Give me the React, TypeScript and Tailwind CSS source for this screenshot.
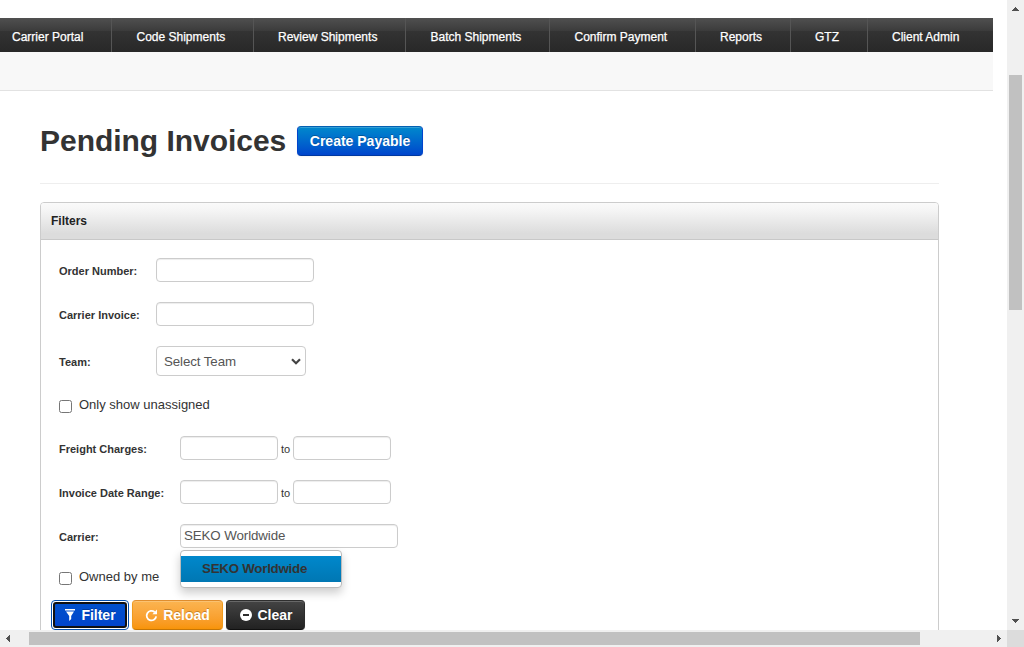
import type { ReactNode } from "react";

const navItems = [
  { label: "Carrier Portal", cell: "w-[112px] pl-[12px]" },
  { label: "Code Shipments", cell: "w-[142px] pl-[24.5px]" },
  { label: "Review Shipments", cell: "w-[152px] pl-[24px]" },
  { label: "Batch Shipments", cell: "w-[144px] pl-[24.5px]" },
  { label: "Confirm Payment", cell: "w-[146px] pl-[24.5px]" },
  { label: "Reports", cell: "w-[95px] pl-[24px]" },
  { label: "GTZ", cell: "w-[77px] pl-[24px]" },
  { label: "Client Admin", cell: "w-[125px] pl-[24px]" },
];

const inputBase =
  "block h-[24px] rounded-[4px] border border-[#ccc] bg-white px-[3px] text-[13.33px] tracking-[-0.1px] text-[#555] shadow-[inset_0_1px_1px_rgba(0,0,0,0.075)] outline-none";

function Field({ label, wide, children }: { label: string; wide?: boolean; children: ReactNode }) {
  return (
    <div className="flex items-center">
      <label className={`pt-[2px] text-[11px] leading-[20px] font-bold whitespace-nowrap ${wide ? "w-[121px]" : "w-[97px]"}`}>
        {label}
      </label>
      {children}
    </div>
  );
}

function Range({ label }: { label: string }) {
  return (
    <Field label={label} wide>
      <input className={`${inputBase} w-[98px]`} />
      <span className="w-[15px] pt-[2px] text-center text-[11px] leading-[20px]">to</span>
      <input className={`${inputBase} w-[98px]`} />
    </Field>
  );
}

function Check({ label }: { label: string }) {
  return (
    <label className="flex h-[20px] items-start text-[13px] leading-[20px]">
      <span className="mt-[5px] mr-[7px] h-[13px] w-[13px] rounded-[2.5px] border border-[#767676] bg-white" />
      {label}
    </label>
  );
}

const btn =
  "flex h-[30px] items-center justify-center rounded-[4px] border text-[14px] leading-[20px] font-bold text-white shadow-[inset_0_1px_0_rgba(255,255,255,0.2),0_1px_2px_rgba(0,0,0,0.05)] [text-shadow:0_-1px_0_rgba(0,0,0,0.25)]";

export default function App() {
  return (
    <div className="grid h-[647px] w-[1024px] grid-cols-[1007px_17px] grid-rows-[630px_17px] overflow-hidden bg-white font-['Liberation_Sans',Arial,sans-serif] text-[#333]">
      <main className="overflow-hidden pt-[18px]">
        <nav className="flex h-[34px] w-[993px] bg-[linear-gradient(#505050_0px,#3b3b3b_13px,#333_13px,#282828_34px)]">
          {navItems.map((n, i) => (
            <a
              key={n.label}
              className={`flex h-full shrink-0 items-center pb-[1px] pt-[4px] text-[12px] leading-[16px] whitespace-nowrap text-white [-webkit-text-stroke:0.25px_#fff] ${n.cell} ${i < 7 ? "border-r border-[#555]" : ""}`}
            >
              {n.label}
            </a>
          ))}
        </nav>
        <div className="h-[39px] w-[993px] border-b border-[#e2e2e2] bg-[#f8f8f8]" />

        <header className="mt-[26px] ml-[40px] flex h-[67px] w-[899px] items-start border-b border-[#eee] pt-[9px]">
          <h1 className="w-[257px] text-[30px] leading-[30px] font-bold tracking-[-0.03px] whitespace-nowrap">Pending Invoices</h1>
          <button className={`${btn} w-[126px] border-t-[#0461b2] border-r-[#04c] border-b-[#0038a0] border-l-[#04c] bg-linear-to-b from-[#08c] to-[#04c]`}>
            Create Payable
          </button>
        </header>

        <section className="mt-[18px] ml-[40px] h-[460px] w-[899px] rounded-t-[4px] border border-[#ccc]">
          <h2 className="h-[37px] rounded-t-[3px] border-b border-[#c8c8c8] bg-[linear-gradient(#fafafa,#f5f5f5_20%,#dcdcdc_85%,#dcdcdc)] pl-[10px] text-[12px] leading-[36px] font-bold text-[#222]">
            Filters
          </h2>
          <form className="pl-[18px] pt-[18px]">
            <div className="flex flex-col gap-[20px]">
              <Field label="Order Number:">
                <input className={`${inputBase} w-[158px]`} />
              </Field>
              <Field label="Carrier Invoice:">
                <input className={`${inputBase} w-[158px]`} />
              </Field>
              <Field label="Team:">
                <div className="flex h-[30px] w-[150px] items-center justify-between rounded-[4px] border border-[#ccc] bg-white pr-[4px] pl-[7px] text-[13.33px] tracking-[-0.1px] text-[#555]">
                  <span className="pt-[1px]">Select Team</span>
                  <svg width="10" height="7" viewBox="0 0 10 7" fill="none" stroke="#444" strokeWidth="2.2">
                    <path d="M1 1.2 5 5.2 9 1.2" />
                  </svg>
                </div>
              </Field>
            </div>
            <div className="mt-[19px]">
              <Check label="Only show unassigned" />
            </div>
            <div className="mt-[21px] flex flex-col gap-[20px]">
              <Range label="Freight Charges:" />
              <Range label="Invoice Date Range:" />
              <Field label="Carrier:" wide>
                <div className="relative">
                  <input className={`${inputBase} w-[218px] pb-[1px]`} defaultValue="SEKO Worldwide" />
                  <ul className="absolute top-[26px] left-0 z-10 h-[38px] w-[162px] rounded-[4px] border border-[#bbb] bg-white py-[5px] shadow-[0_5px_10px_rgba(0,0,0,0.2)]">
                    <li className="h-[26px] bg-linear-to-b from-[#08c] to-[#0077b3] pl-[21px] text-[13.33px] leading-[25px] font-bold tracking-[-0.25px] whitespace-nowrap text-[#333]">
                      SEKO Worldwide
                    </li>
                  </ul>
                </div>
              </Field>
            </div>
            <div className="mt-[19px]">
              <Check label="Owned by me" />
            </div>
            <div className="mt-[13px] -ml-[8px] flex gap-[3px]">
              <button
                type="button"
                className="h-[30px] w-[78px] rounded-[4px] border border-[#0450ae] bg-white p-[1px]"
              >
                <span className="flex h-full items-center justify-center gap-[6px] rounded-[3px] border-2 border-[#101010] bg-linear-to-b from-[#0050cc] to-[#04c] pl-[1px] text-[14px] font-bold text-white [text-shadow:0_-1px_0_rgba(0,0,0,0.25)]">
                  <svg width="10" height="12" viewBox="0 0 10 12" fill="#fff">
                    <path d="M0 0H10V1.6H0ZM1 2.6H9L6.2 7V10L4.2 12V7Z" />
                  </svg>
                  Filter
                </span>
              </button>
              <button
                type="button"
                className={`${btn} w-[91px] gap-[5px] border-t-[#e08e2e] border-r-[#f09a1c] border-b-[#c67605] border-l-[#f09a1c] bg-linear-to-b from-[#fbb450] to-[#f89406]`}
              >
                <svg width="13" height="13" viewBox="0 0 13 13" fill="none">
                  <path d="M9.6 3A4.8 4.8 0 1 0 11.2 7.4" stroke="#fff" strokeWidth="1.8" />
                  <path d="M12 0.6V5.2H7.4Z" fill="#fff" />
                </svg>
                Reload
              </button>
              <button
                type="button"
                className={`${btn} w-[79px] gap-[5px] border-t-[#303030] border-r-[#2c2c2c] border-b-[#101010] border-l-[#2c2c2c] bg-linear-to-b from-[#444] to-[#222] pl-[2px]`}
              >
                <svg width="12" height="12" viewBox="0 0 12 12">
                  <circle cx="6" cy="6" r="6" fill="#fff" />
                  <path d="M3 5H9V7H3Z" fill="#2d2d2d" />
                </svg>
                Clear
              </button>
            </div>
          </form>
        </section>
      </main>

      <div className="flex flex-col items-center bg-[#f0f0f0] pt-[7px]">
        <svg width="7" height="4" viewBox="0 0 7 4" fill="#505050" shapeRendering="crispEdges">
          <path d="M3 0H4V1H5V2H6V3H7V4H0V3H1V2H2V1H3Z" />
        </svg>
        <div className="mt-[64px] h-[235px] w-[13px] bg-[#c1c1c1]" />
        <svg className="mt-[309px]" width="7" height="4" viewBox="0 0 7 4" fill="#505050" shapeRendering="crispEdges">
          <path d="M0 0H7V1H6V2H5V3H4V4H3V3H2V2H1V1H0Z" />
        </svg>
      </div>
      <div className="flex items-center bg-[#f0f0f0] pl-[6px]">
        <svg width="4" height="7" viewBox="0 0 4 7" fill="#505050" shapeRendering="crispEdges">
          <path d="M4 0V7H3V6H2V5H1V4H0V3H1V2H2V1H3V0Z" />
        </svg>
        <div className="ml-[19px] h-[13px] w-[891px] bg-[#c1c1c1]" />
        <svg className="ml-[77px]" width="4" height="7" viewBox="0 0 4 7" fill="#505050" shapeRendering="crispEdges">
          <path d="M0 0V7H1V6H2V5H3V4H4V3H3V2H2V1H1V0Z" />
        </svg>
      </div>
      <div className="bg-[#dcdcdc]" />
    </div>
  );
}
